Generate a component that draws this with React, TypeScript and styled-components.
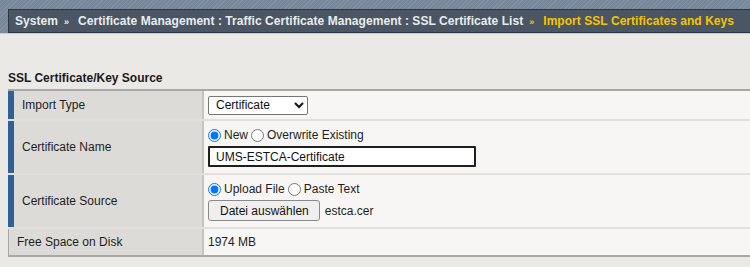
import styled, { createGlobalStyle } from "styled-components";

const GlobalStyle = createGlobalStyle`
  body {
    margin: 0;
    background-color: #ebe9e5;
    font-family: "Liberation Sans", Arial, sans-serif;
    font-size: 12px;
    color: #1e1e1e;
  }
`;

const Header = styled.div`
  height: 34px;
  box-sizing: border-box;
  padding: 9px 0 0 8px;
  background-color: #778799;
  background-image: repeating-linear-gradient(
    135deg,
    rgba(255, 255, 255, 0.09) 0px,
    rgba(255, 255, 255, 0.09) 1px,
    rgba(0, 0, 0, 0) 1px,
    rgba(0, 0, 0, 0) 3px
  );
  border-bottom: 1px solid #c9ccd0;
`;

const Crumbs = styled.div`
  height: 24px;
  box-sizing: border-box;
  display: flex;
  align-items: center;
  padding-left: 6px;
  background-color: #4b5664;
  border: 1px solid #2d3641;
  border-right: none;
  font-weight: 700;
  letter-spacing: 0.05px;
  color: #e9ecef;
  white-space: nowrap;
  overflow: hidden;
`;

const Sep = styled.span<{ $active?: boolean }>`
  font-size: 9px;
  margin: 2px 9px 0 6px;
  color: ${p => (p.$active ? "#f5c400" : "#e9ecef")};
`;

const Current = styled.span`
  color: #f5c400;
`;

const SectionTitle = styled.div`
  margin: 37px 0 0 8px;
  font-weight: 700;
  line-height: 14px;
  color: #1a1a1a;
`;

const Table = styled.div`
  margin: 4px 0 0 8px;
  border-top: 2px solid #aaa8a4;
  border-bottom: 2px solid #aaa8a4;
`;

const Row = styled.div<{ $height: number; $last?: boolean }>`
  display: flex;
  height: ${p => p.$height}px;
  box-sizing: border-box;
  border-bottom: ${p => (p.$last ? "none" : "2px solid #e2e0dc")};
`;

const Label = styled.div<{ $marked?: boolean }>`
  width: 196px;
  box-sizing: border-box;
  display: flex;
  align-items: center;
  padding-left: 8px;
  background-color: #dddbd7;
  border-left: ${p => (p.$marked ? "6px solid #2f6096" : "1px solid #aaa8a4")};
  border-right: 2px solid #c6c4c0;
`;

const Value = styled.div`
  flex: 1;
  display: flex;
  flex-direction: column;
  justify-content: center;
  gap: 3px;
  padding-left: 4px;
  background-color: #f7f6f4;
`;

const Line = styled.div`
  display: flex;
  align-items: center;
  height: 16px;
`;

const Radio = styled.input`
  width: 13px;
  height: 13px;
  margin: 0 3px 0 0;
`;

const RadioText = styled.span`
  margin-right: 3px;
`;

const Select = styled.select`
  width: 100px;
  height: 19px;
  padding: 0 0 0 3px;
  font-family: "Liberation Sans", Arial, sans-serif;
  font-size: 12px;
  color: #111;
  background-color: #fff;
  border: 1px solid #767676;
  border-radius: 2px;
`;

const TextInput = styled.input`
  width: 268px;
  height: 21px;
  box-sizing: border-box;
  padding: 0 6px;
  font-family: "Liberation Sans", Arial, sans-serif;
  font-size: 12px;
  color: #111;
  background-color: #fff;
  border: 2px solid #1f1f1f;
  border-radius: 1px;
  outline: none;
`;

const FileRow = styled.div`
  display: flex;
  align-items: center;
  gap: 5px;
`;

const FileButton = styled.button`
  height: 21px;
  padding: 0 10px 0 11px;
  font-family: "Liberation Sans", Arial, sans-serif;
  font-size: 12px;
  color: #111;
  background-color: #efefef;
  border: 1px solid #8a8a8a;
  border-radius: 3px;
`;

export default function App() {
  return (
    <>
      <GlobalStyle />
      <Header>
        <Crumbs>
          System
          <Sep>»</Sep>
          Certificate Management : Traffic Certificate Management : SSL Certificate List
          <Sep $active>»</Sep>
          <Current>Import SSL Certificates and Keys</Current>
        </Crumbs>
      </Header>

      <SectionTitle>SSL Certificate/Key Source</SectionTitle>
      <Table>
        <Row $height={30}>
          <Label $marked>Import Type</Label>
          <Value>
            <Select defaultValue="cert">
              <option value="cert">Certificate</option>
              <option value="key">Key</option>
            </Select>
          </Value>
        </Row>
        <Row $height={54}>
          <Label $marked>Certificate Name</Label>
          <Value>
            <Line>
              <Radio type="radio" name="certName" defaultChecked />
              <RadioText>New</RadioText>
              <Radio type="radio" name="certName" />
              <RadioText>Overwrite Existing</RadioText>
            </Line>
            <TextInput type="text" defaultValue="UMS-ESTCA-Certificate" />
          </Value>
        </Row>
        <Row $height={54}>
          <Label $marked>Certificate Source</Label>
          <Value>
            <Line>
              <Radio type="radio" name="certSource" defaultChecked />
              <RadioText>Upload File</RadioText>
              <Radio type="radio" name="certSource" />
              <RadioText>Paste Text</RadioText>
            </Line>
            <FileRow>
              <FileButton type="button">Datei auswählen</FileButton>
              <span>estca.cer</span>
            </FileRow>
          </Value>
        </Row>
        <Row $height={26} $last>
          <Label>Free Space on Disk</Label>
          <Value>1974 MB</Value>
        </Row>
      </Table>
    </>
  );
}
